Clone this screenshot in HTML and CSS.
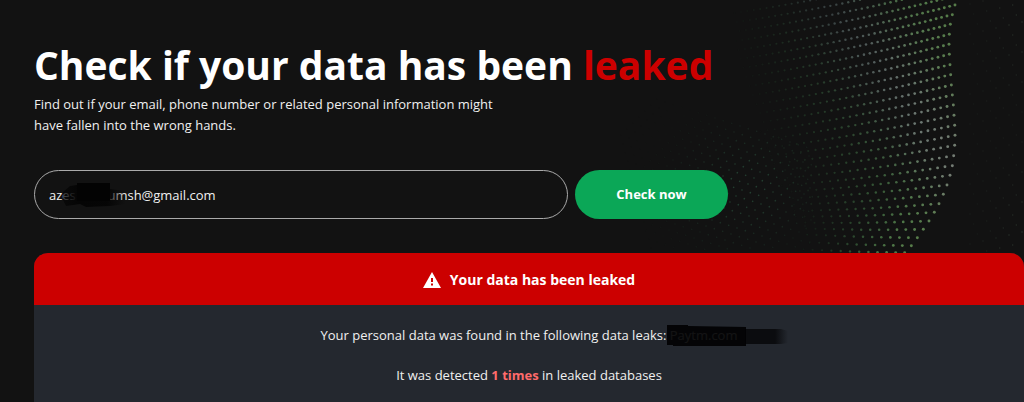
FILE: index.html
```html
<!DOCTYPE html>
<html lang="en">
<head>
<meta charset="utf-8">
<meta name="viewport" content="width=device-width, initial-scale=1">
<title>Data leak checker</title>
<link rel="stylesheet" href="styles.css">
</head>
<body>
<svg class="dots" id="dots" width="424" height="260" viewBox="0 0 1272 780" aria-hidden="true"></svg>
<main class="page">
  <h1 class="title">Check if your data has been <span class="title-accent">leaked</span></h1>
  <p class="intro">Find out if your email, phone number or related personal information might have fallen into the wrong hands.</p>
  <form class="form">
    <div class="field">
      <input class="input" type="text" aria-label="Email or phone number" value="azes       humsh@gmail.com">
      <svg class="smudge smudge-email" width="66" height="28" viewBox="0 0 66 28" aria-hidden="true">
        <defs>
          <linearGradient id="fade-a"><stop offset="0" stop-color="#050505" stop-opacity=".7"/><stop offset=".25" stop-color="#050505"/><stop offset=".7" stop-color="#050505" stop-opacity=".95"/><stop offset="1" stop-color="#050505" stop-opacity="0"/></linearGradient>
        </defs>
        <path d="M3 11L10 5L17 4V2H50V8L66 10V23L50 25L26 26L20 23L6 25L3 19Z" fill="url(#fade-a)"/>
        <path d="M17 2H50V20H17Z" fill="#030303"/>
      </svg>
    </div>
    <button class="button" type="button">Check now</button>
  </form>
  <section class="panel">
    <h2 class="panel-head">
      <svg class="warning" width="18" height="16" viewBox="0 0 18 16" aria-hidden="true"><path d="M9 0L18 16H0Z" fill="#fff"/><path d="M8 6h2v4H8zM8 11.500h2v2H8z" fill="#c00"/></svg>
      Your data has been leaked
    </h2>
    <div class="panel-body">
      <p class="line">Your personal data was found in the following data leaks: <span class="source">Paytm.com
        <svg class="smudge smudge-source" width="121" height="22" viewBox="0 0 121 22" aria-hidden="true">
          <defs><linearGradient id="fade-b"><stop offset="0" stop-color="#0b0c0f"/><stop offset=".7" stop-color="#0b0c0f"/><stop offset="1" stop-color="#0b0c0f" stop-opacity="0"/></linearGradient></defs>
          <path d="M78 4H114L121 6V18L114 19H78Z" fill="url(#fade-b)"/>
          <path d="M0 0H21V1L79 2V21H6V20H0Z" fill="#020203" fill-opacity=".93"/>
        </svg></span></p>
      <p class="line">It was detected <strong class="count">1 times</strong> in leaked databases</p>
    </div>
  </section>
</main>
<script src="dots.js"></script>
</body>
</html>
```
FILE: styles.css
```css
* {
  box-sizing: border-box;
}

body {
  margin: 0;
  background: #121212;
  color: #f0f0f0;
  font-family: "Open Sans", "Noto Sans", sans-serif;
  font-size: 13px;
  line-height: 21px;
  overflow: hidden;
}

.dots {
  position: absolute;
  top: 0;
  right: 0;
}

.page {
  position: relative;
  padding: 36px 0 0 34px;
}

.title {
  margin: 0;
  color: #fff;
  font-size: 39px;
  font-weight: 700;
  line-height: 58px;
}

.title-accent {
  color: #c00;
}

.intro {
  max-width: 480px;
  margin: 0;
}

.form {
  display: flex;
  gap: 7px;
  max-width: 694px;
  margin-top: 34px;
}

.field {
  position: relative;
  flex: 1;
}

.input {
  width: 100%;
  height: 49px;
  padding: 0 14px;
  border: 1px solid #aaa;
  border-radius: 25px;
  background: #121212;
  color: #f0f0f0;
  font: inherit;
}

.smudge {
  position: absolute;
}

.smudge-email {
  top: 11px;
  left: 26px;
}

.button {
  width: 153px;
  border: 0;
  border-radius: 25px;
  background: #0ba757;
  color: #fff;
  font: inherit;
  font-weight: 700;
}

.panel {
  margin-top: 34px;
  border-radius: 14px 14px 0 0;
  background: #24282f;
  overflow: hidden;
}

.panel-head {
  display: flex;
  align-items: center;
  justify-content: center;
  gap: 9px;
  margin: 0;
  padding: 16px 0 15px;
  background: #c00;
  color: #fff;
  font-size: 14px;
  font-weight: 700;
  line-height: 21px;
}

.panel-body {
  display: flex;
  flex-direction: column;
  gap: 19px;
  padding: 20px 0 16px;
  text-align: center;
}

.line {
  margin: 0;
}

.source {
  position: relative;
}

.smudge-source {
  top: -1px;
  left: -3px;
}

.count {
  color: #ff6b6b;
}
```
FILE: dots.js
```js
// Draws the halftone wave behind the page header.
const svg = document.getElementById('dots');

function dot(x, y, r, color, alpha) {
  const c = document.createElementNS('http://www.w3.org/2000/svg', 'circle');
  c.setAttribute('cx', x.toFixed(1));
  c.setAttribute('cy', y.toFixed(1));
  c.setAttribute('r', r.toFixed(1));
  c.setAttribute('fill', color);
  c.setAttribute('fill-opacity', alpha.toFixed(2));
  svg.appendChild(c);
}

// Right edge of every row: x, y.
const edge = [
  [1110, -105], [1098, -75], [1086, -45], [1075, -15],
  [1065, 15], [1057, 44], [1051, 73], [1048, 103], [1047, 133], [1048, 163],
  [1050, 194], [1052, 224], [1054, 255], [1057, 285], [1060, 315], [1062, 346],
  [1064, 376], [1065, 406], [1064, 436], [1061, 467], [1057, 497], [1050, 526],
  [1041, 555], [1030, 583], [1017, 611], [1003, 637], [987, 663], [970, 688],
  [952, 713], [934, 737], [914, 758]
];

edge.forEach(([ex, ey]) => {
  const t = Math.max(0, Math.min(1, ey / 720));
  const slope = 0.26 - 0.27 * Math.pow(t, 2.6);
  const step = 16 + 11 * Math.pow(t, 1.6);
  const left = 400 + 200 * t;
  let x = ex;
  for (let i = 0; x > left; i++) {
    const d = ex - x;
    const y = ey + slope * d - 0.00008 * d * d;
    const f = (x - left) / (ex - left);
    const gray = Math.exp(-Math.pow((x - 740 - ey * 0.65) / 130, 2));
    const red = Math.round(45 + 55 * f + 35 * gray);
    const green = Math.round(105 + 40 * f);
    const blue = Math.round(65 + 20 * f + 50 * gray);
    dot(x, y, 2.9 + 1.5 * f, `rgb(${red},${green},${blue})`, Math.min(0.85, 0.02 + f * 1.05));
    x -= step + d * 0.005;
  }
});

// Faint far side of the wave, left of the bright rows.
for (let r = 0; r < 20; r++) {
  for (let k = 0; k < 26; k++) {
    const x = 20 + k * 25 + r * 7;
    const y = 250 + r * 26 + k * 8;
    const fall = Math.exp(-Math.pow((x - 440) / 190, 2) - Math.pow((y - 560) / 170, 2));
    if (x < 640 && y < 750) dot(x, y, 2.5, '#326048', 0.6 * fall);
  }
}

// Sparse specks right of the wave.
for (let r = 0; r < 26; r++) {
  for (let k = 0; k < 5; k++) {
    const x = 1110 + k * 39 + (r % 3) * 11;
    const y = 12 + r * 30 - k * 9;
    dot(x, y, 2.4, '#4b6050', 0.12 + 0.09 * k * Math.abs(r - 13) / 13);
  }
}
```
